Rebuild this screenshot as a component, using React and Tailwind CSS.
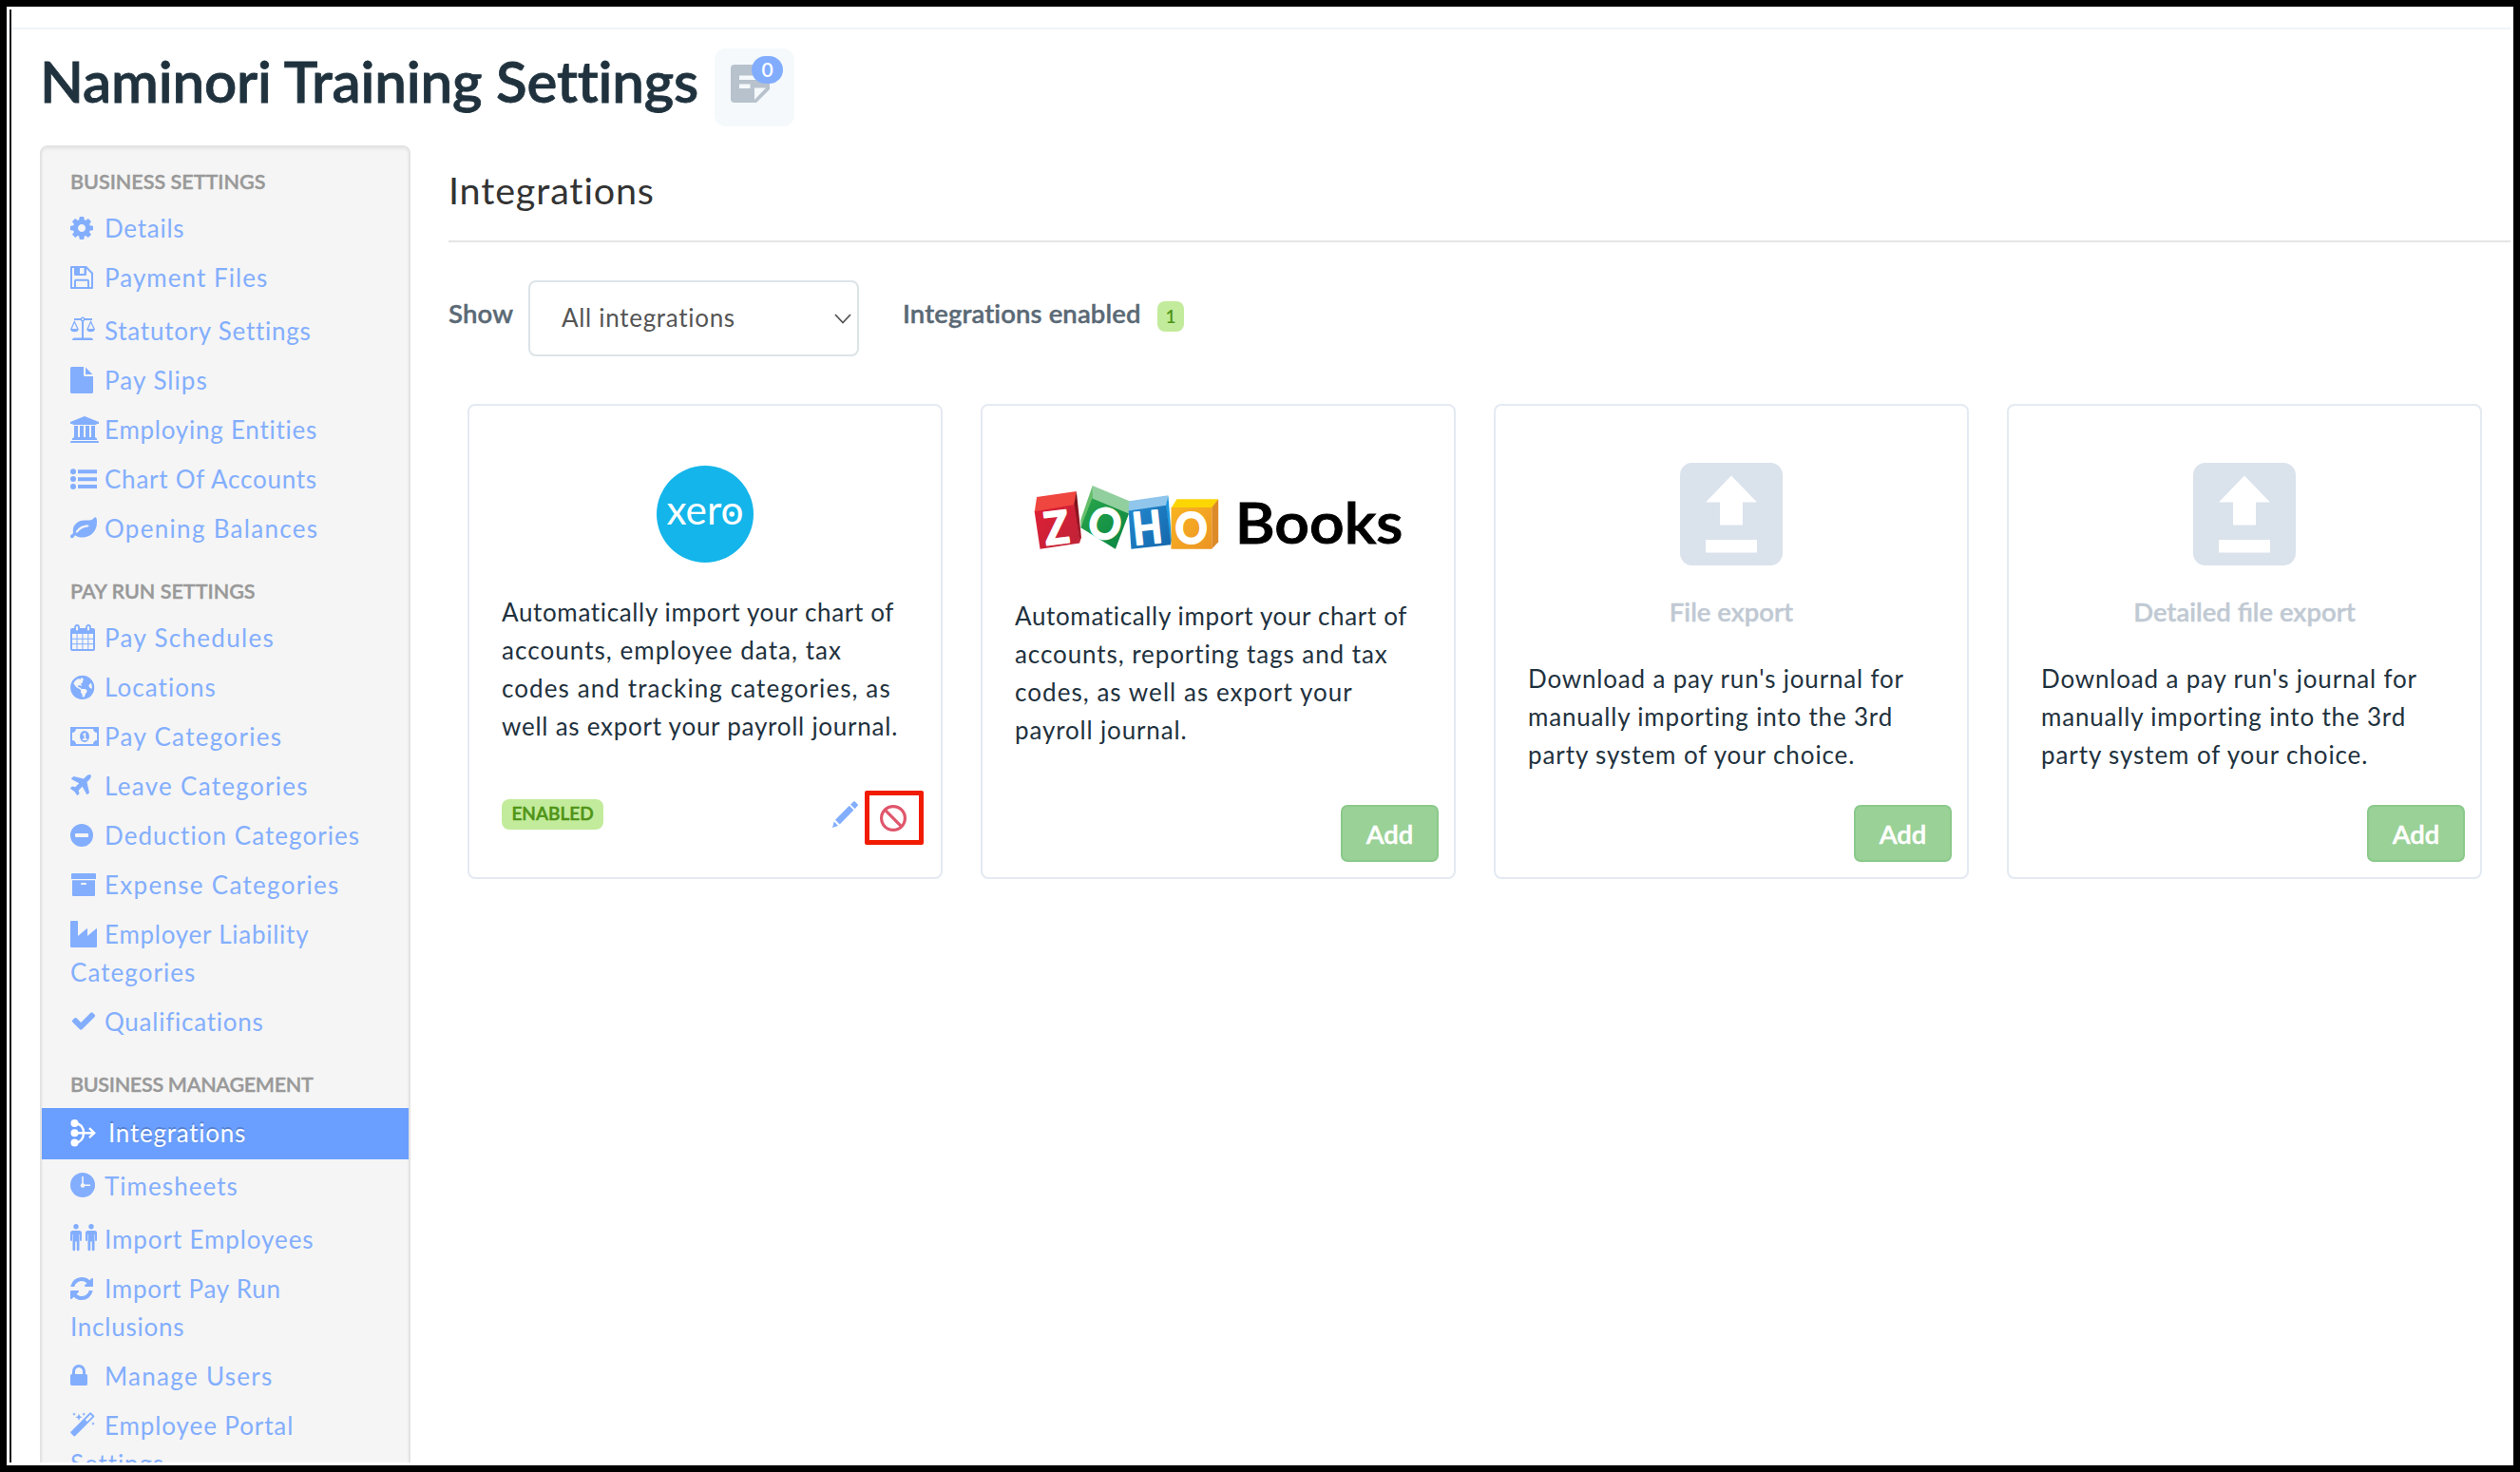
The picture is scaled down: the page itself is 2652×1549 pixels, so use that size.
import { FaGlobeAmericas, FaLeaf } from "react-icons/fa";

// Every sidebar icon is drawn on a 28px-high grid whose text baseline is at y=24.
function Glyph({ w = 30, children }) {
  return (
    <svg width={w} height="28" viewBox={`0 0 ${w} 28`} className="inline-block overflow-visible align-[-4px]" fill="currentColor">
      {children}
    </svg>
  );
}

const CogIcon = () => (
  <Glyph>
    <path transform="translate(-2 0) scale(0.015625)" d="M1152 896q0-106-75-181t-181-75-181 75-75 181 75 181 181 75 181-75 75-181zm512-109v222q0 12-8 23t-20 13l-185 28q-19 54-39 91 35 50 107 138 10 12 10 25t-9 23q-27 37-99 108t-94 71q-12 0-26-9l-138-108q-44 23-91 38-16 136-29 186-7 28-36 28h-222q-14 0-24.500-8.500t-11.500-21.500l-28-184q-49-16-90-37l-141 107q-10 9-25 9-14 0-25-11-126-114-165-168-7-10-7-23 0-12 8-23 15-21 51-66.500t54-70.500q-27-50-41-99l-183-27q-13-2-21-12.500t-8-23.500v-222q0-12 8-23t19-13l186-28q14-46 39-92-40-57-107-138-10-12-10-24 0-10 9-23 26-36 98.500-107.500t94.500-71.500q13 0 26 10l138 107q44-23 91-38 16-136 29-186 7-28 36-28h222q14 0 24.500 8.500t11.500 21.500l28 184q49 16 90 37l142-107q9-9 24-9 13 0 25 10 129 119 165 170 7 8 7 22 0 12-8 23-15 21-51 66.500t-54 70.500q26 50 41 98l183 28q13 2 21 12.500t8 23.500z" />
  </Glyph>
);

const SaveIcon = () => (
  <Glyph>
    <path d="M1 3h15.500L23 9.500V25H1z" fill="none" stroke="currentColor" strokeWidth="2" strokeLinejoin="round" />
    <path d="M4 2h13v8.500a1.500 1.500 0 0 1-1.500 1.500h-10A1.500 1.500 0 0 1 4 10.500zM10 4v6h4.500V4z" fillRule="evenodd" />
    <path d="M5 25v-7.500a.8.8 0 0 1 .8-.8h12.400a.8.8 0 0 1 .8.800V25" fill="none" stroke="currentColor" strokeWidth="2" />
  </Glyph>
);

const ScaleIcon = () => (
  <Glyph>
    <path d="M4 2h7.500M14.500 2H23M13 4v18" fill="none" stroke="currentColor" strokeWidth="2" />
    <circle cx="13" cy="2" r="1.700" fill="none" stroke="currentColor" strokeWidth="1.400" />
    <path d="M.8 12.500L4.300 4.500l3.800 8M18 12.500l3.600-8 3.700 8" fill="none" stroke="currentColor" strokeWidth="1.300" />
    <path d="M0 12h8.800c0 2-1.800 3.300-4.400 3.300S0 14 0 12zM17.200 12H26c0 2-1.800 3.300-4.400 3.300s-4.400-1.300-4.400-3.300zM2 24c0-1.500 1-2.500 2.500-2.500h17c1.500 0 2.500 1 2.500 2.500z" />
  </Glyph>
);

const FileIcon = () => (
  <Glyph>
    <path d="M0 1.500A1.500 1.500 0 0 1 1.500 0H14v8.500A1.500 1.500 0 0 0 15.500 10H24v16.500a1.500 1.500 0 0 1-1.500 1.500h-21A1.500 1.500 0 0 1 0 26.500zM16 .4L23.300 8H16z" />
  </Glyph>
);

const BankIcon = () => (
  <Glyph>
    <path d="M15 0l15 6v2h-2l-1 1H3L2 8H0V6zM4 10h4v12h2V10h4v12h2V10h4v12h2V10h4v12l2 1.500V25H2v-1.500L4 22zM1 26h28l1 1v1H0v-1z" />
  </Glyph>
);

const ListIcon = () => (
  <Glyph>
    <circle cx="3" cy="6.300" r="3" />
    <circle cx="3" cy="14" r="3" />
    <circle cx="3" cy="22" r="3" />
    <path d="M8 4.300h20v4H8zM8 12.200h20v4H8zM8 20.100h20v4H8z" />
  </Glyph>
);

const LeafIcon = () => (
  <Glyph>
    <path d="M27.500 3.200c-.5-1.200-1.800-1.300-2.600-.3-1.500 2-3.200 2.600-6.400 2.600h-3.300C8 5.500 2.800 10.200 2.800 16.500c0 1 .1 1.700.3 2.400C1.500 20.300 0 21 0 22.400c0 .9.800 1.900 1.900 1.900 1.400 0 2-1.700 3.300-3.100 1.800 1.400 4.200 2.300 7.300 2.300C21.500 23.500 28 17 28 7.500c0-1.700-.1-3.200-.5-4.300zM7.300 18.400c-.9.600-2-.5-1.300-1.400 3.500-4.300 6.700-6.400 12.500-6.400 1.300 0 1.300 1.900 0 1.900-4.500.2-7.300 2-11.200 5.900z" fillRule="evenodd" />
  </Glyph>
);

const CalendarIcon = () => (
  <Glyph>
    <path d="M2 4h22a2 2 0 0 1 2 2v20a2 2 0 0 1-2 2H2a2 2 0 0 1-2-2V6a2 2 0 0 1 2-2zM2 10v16h22V10z" fillRule="evenodd" />
    <path d="M7 10v16M12.900 10v16M18.800 10v16M2 15.300h22M2 20.700h22" fill="none" stroke="currentColor" strokeWidth="1" />
    <rect x="5" y="1" width="4" height="6.500" rx="2" className="fill-[#f5f5f5] stroke-current" strokeWidth="1.800" />
    <rect x="17" y="1" width="4" height="6.500" rx="2" className="fill-[#f5f5f5] stroke-current" strokeWidth="1.800" />
  </Glyph>
);

const GlobeIcon = () => (
  <Glyph>
    <FaGlobeAmericas x="-0.300" y="1.400" width="24.600" height="24.600" />
  </Glyph>
);

const MoneyIcon = () => (
  <Glyph>
    <path d="M0 4h30v20H0zM6 6c0 2.200-1.800 4-4 4v8c2.200 0 4 1.800 4 4h18c0-2.200 1.800-4 4-4v-8c-2.200 0-4-1.800-4-4z" fillRule="evenodd" />
    <ellipse cx="15" cy="14" rx="5" ry="6" />
    <path d="M13 11.800l1.800-1.600h1.400v6.200h1.600V18h-5v-1.600h1.700v-4l-1 .7z" className="fill-[#f5f5f5]" />
  </Glyph>
);

const PlaneIcon = () => (
  <Glyph>
    <path transform="translate(-3 0) scale(0.015625)" d="M1568 160q44 52 12 148t-108 172l-161 161 160 696q5 19-12 33l-128 96q-7 6-19 6-4 0-7-1-15-3-21-16l-279-508-259 259 53 194q5 17-8 31l-96 96q-9 9-23 9h-2q-15-2-24-13l-189-252-252-189q-11-7-13-23-1-13 9-25l96-97q9-9 23-9 6 0 8 1l194 53 259-259-508-279q-14-8-17-24-2-16 9-27l128-128q14-13 30-8l665 159 160-160q76-76 172-108t148 12z" />
  </Glyph>
);

const MinusIcon = () => (
  <Glyph>
    <path d="M12 2a12 12 0 1 0 0 24 12 12 0 1 0 0-24zM6 12h12a1 1 0 0 1 1 1v2a1 1 0 0 1-1 1H6a1 1 0 0 1-1-1v-2a1 1 0 0 1 1-1z" fillRule="evenodd" />
  </Glyph>
);

const ArchiveIcon = () => (
  <Glyph>
    <path d="M2 2h24a1 1 0 0 1 1 1v5H1V3a1 1 0 0 1 1-1zM2 9.200h24V25a1 1 0 0 1-1 1H3a1 1 0 0 1-1-1zM12 12a.9.9 0 0 0 0 2h4a.9.9 0 0 0 0-2z" fillRule="evenodd" />
  </Glyph>
);

const FactoryIcon = () => (
  <Glyph>
    <path d="M0 1a1 1 0 0 1 1-1h6a1 1 0 0 1 1 1v15l9.200-7.800a.5.5 0 0 1 .8.400V16l9.200-7.800a.5.5 0 0 1 .8.400V27a1 1 0 0 1-1 1H1a1 1 0 0 1-1-1z" />
  </Glyph>
);

const CheckIcon = () => (
  <Glyph>
    <path transform="translate(0 -1) scale(0.015625)" d="M1671 566q0 40-28 68l-724 724-136 136q-28 28-68 28t-68-28l-136-136-362-362q-28-28-28-68t28-68l136-136q28-28 68-28t68 28l294 295 656-657q28-28 68-28t68 28l136 136q28 28 28 68z" />
  </Glyph>
);

const MergeIcon = () => (
  <Glyph>
    <circle cx="4.500" cy="4" r="4" />
    <circle cx="4.500" cy="14.200" r="4" />
    <circle cx="4.500" cy="24.500" r="4" />
    <path d="M4.500 3.500c6 1 9.500 5 9.500 10.700S10.500 24 4.500 25M4.500 14.200H25M20 9.200l5.200 5-5.200 5" fill="none" stroke="currentColor" strokeWidth="2.400" />
  </Glyph>
);

const ClockIcon = () => (
  <Glyph>
    <circle cx="13" cy="13" r="13" />
    <path d="M13 4v9.300h8" fill="none" className="stroke-[#f5f5f5]" strokeWidth="1.600" />
    <circle cx="13" cy="13.500" r="2.300" className="fill-[#f5f5f5]" />
  </Glyph>
);

const MAN = "M2.500 5h7A2.500 2.500 0 0 1 12 7.500V15a1 1 0 0 1-2 0V9h-.5v16a1.300 1.300 0 0 1-2.700 0v-8.500h-1.600V25a1.300 1.300 0 0 1-2.700 0V9H2v6a1 1 0 0 1-2 0V7.500A2.500 2.500 0 0 1 2.500 5z";
const PeopleIcon = () => (
  <Glyph>
    <circle cx="6" cy="0.700" r="2.700" />
    <path d={MAN} />
    <g transform="translate(16 0)">
      <circle cx="6" cy="0.700" r="2.700" />
      <path d={MAN} />
    </g>
  </Glyph>
);

const RefreshIcon = () => (
  <Glyph>
    <path transform="translate(-2 0) scale(0.015625)" d="M1639 1056q0 5-1 7-64 268-268 434.500t-478 166.500q-146 0-282.500-55t-243.500-157l-129 129q-19 19-45 19t-45-19-19-45v-448q0-26 19-45t45-19h448q26 0 45 19t19 45-19 45l-137 137q71 66 161 102t187 36q134 0 250-65t186-179q11-17 53-117 8-23 30-23h192q13 0 22.500 9.500t9.500 22.500zm25-800v448q0 26-19 45t-45 19h-448q-26 0-45-19t-19-45 19-45l138-138q-148-137-349-137-134 0-250 65t-186 179q-11 17-53 117-8 23-30 23h-199q-13 0-22.500-9.500t-9.500-22.500v-7q65-268 270-434.500t480-166.500q146 0 284 55.500t245 156.500l130-129q19-19 45-19t45 19 19 45z" />
  </Glyph>
);

const LockIcon = () => (
  <Glyph>
    <path transform="translate(-5 0) scale(0.015625)" d="M640 768h512v-192q0-106-75-181t-181-75-181 75-75 181v192zm832 96v576q0 40-28 68t-68 28h-960q-40 0-68-28t-28-68v-576q0-40 28-68t68-28h32v-192q0-184 132-316t316-132 316 132 132 316v192h32q40 0 68 28t28 68z" />
  </Glyph>
);

const WandIcon = () => (
  <Glyph>
    <path d="M20.300.7a1.300 1.300 0 0 1 1.800 0l2.800 2.800a1.300 1.300 0 0 1 0 1.800L5.200 25a1.300 1.300 0 0 1-1.800 0L.6 22.200a1.300 1.300 0 0 1 0-1.800zM21.200 2.600l-5.400 5.400 1.900 1.900 5.400-5.400z" fillRule="evenodd" />
    <path d="M9 1.500l1 2.700 2.700 1-2.700 1-1 2.700-1-2.700-2.700-1 2.700-1zM4 .3l.6 1.200 1.200.6-1.200.6L4 3.900l-.6-1.200-1.200-.6 1.200-.6zM14.200.3l.6 1.200 1.200.6-1.200.6-.6 1.200-.6-1.200-1.200-.6 1.200-.6zM24 10.300l.6 1.200 1.200.6-1.200.6-.6 1.200-.6-1.200-1.200-.6 1.200-.6z" />
  </Glyph>
);

const NORMAL = "tracking-[0.750px]";
const WIDE = "tracking-[1.050px]";
const WIDER = "tracking-[1.300px]";

const SECTIONS = [
  {
    title: "BUSINESS SETTINGS",
    items: [
      { icon: CogIcon, lines: ["Details"] },
      { icon: SaveIcon, lines: ["Payment Files"], spacing: WIDE },
      { icon: ScaleIcon, lines: ["Statutory Settings"], tall: true },
      { icon: FileIcon, lines: ["Pay Slips"], spacing: WIDE },
      { icon: BankIcon, lines: ["Employing Entities"] },
      { icon: ListIcon, lines: ["Chart Of Accounts"] },
      { icon: LeafIcon, lines: ["Opening Balances"], spacing: WIDER },
    ],
  },
  {
    title: "PAY RUN SETTINGS",
    items: [
      { icon: CalendarIcon, lines: ["Pay Schedules"], spacing: WIDER },
      { icon: GlobeIcon, lines: ["Locations"], spacing: WIDE },
      { icon: MoneyIcon, lines: ["Pay Categories"], spacing: WIDER },
      { icon: PlaneIcon, lines: ["Leave Categories"], spacing: WIDER },
      { icon: MinusIcon, lines: ["Deduction Categories"], spacing: WIDE },
      { icon: ArchiveIcon, lines: ["Expense Categories"], spacing: WIDER },
      { icon: FactoryIcon, lines: ["Employer Liability", "Categories"], nextSpacing: WIDE },
      { icon: CheckIcon, lines: ["Qualifications"] },
    ],
  },
  {
    title: "BUSINESS MANAGEMENT",
    titleSpacing: "tracking-[-0.300px]",
    items: [
      { icon: MergeIcon, lines: ["Integrations"], active: true },
      { icon: ClockIcon, lines: ["Timesheets"], tall: true, spacing: WIDE },
      { icon: PeopleIcon, lines: ["Import Employees"], tall: true, spacing: "tracking-[0.900px]" },
      { icon: RefreshIcon, lines: ["Import Pay Run", "Inclusions"] },
      { icon: LockIcon, lines: ["Manage Users"], spacing: WIDER },
      { icon: WandIcon, lines: ["Employee Portal", "Settings"], spacing: "tracking-[0.900px]" },
    ],
  },
];

function NavItem({ icon: Icon, lines, active, tall, spacing = NORMAL, nextSpacing = "" }) {
  const pad = active ? "pt-1.5" : tall ? "pt-2" : "pt-1";
  const tone = active
    ? "bg-[#6a9eff] text-white [text-shadow:0_-2px_0_rgba(0,0,0,0.2)]"
    : "text-[#83aefe]";
  return (
    <li className={`${pad} ${tone} ${spacing} pb-2 pl-[30px] text-[26px] leading-10 whitespace-nowrap`}>
      <span className={active ? "inline-block w-[40px]" : "inline-block w-[36px]"}>
        <Icon />
      </span>
      {lines[0]}
      {lines[1] && <div className={nextSpacing}>{lines[1]}</div>}
    </li>
  );
}

function Sidebar() {
  return (
    <nav className="h-[1480px] w-[390px] shrink-0 rounded-lg border-2 border-[#e3e3e3] bg-[#f5f5f5] shadow-[inset_0_2px_3px_rgba(0,0,0,0.06)]">
      {SECTIONS.map((s, i) => (
        <section key={s.title} className={i === 0 ? "pt-4" : "pt-[18px]"}>
          <h3 className={`${s.titleSpacing || ""} mb-[5px] pl-[30px] text-[21.500px] leading-10 font-semibold text-[#999] [-webkit-text-stroke:0.4px_#999]`}>{s.title}</h3>
          <ul>
            {s.items.map((it) => (
              <NavItem key={it.lines[0]} {...it} />
            ))}
          </ul>
        </section>
      ))}
    </nav>
  );
}

function XeroLogo() {
  return (
    <svg width="102" height="102" viewBox="0 0 102 102" className="mt-[63px]">
      <circle cx="51" cy="51" r="51" fill="#13b5ea" />
      <text x="10.500" y="61.500" textLength="81" lengthAdjust="spacingAndGlyphs" fontFamily="Lato" fontSize="43" fill="#fff">
        xero
      </text>
      <circle cx="79.200" cy="51" r="2.800" fill="#fff" />
    </svg>
  );
}

function ZohoBooksLogo() {
  return (
    <svg width="388" height="68" viewBox="198 298 1125 200" preserveAspectRatio="none" className="mt-[84px] overflow-visible">
      <defs>
        <linearGradient id="zr" x1="0" y1="0" x2="1" y2="1"><stop offset="0" stopColor="#e01f35" /><stop offset="1" stopColor="#bd2338" /></linearGradient>
        <linearGradient id="zg" x1="0" y1="0" x2="1" y2="1"><stop offset="0" stopColor="#2aa64a" /><stop offset="1" stopColor="#078443" /></linearGradient>
        <linearGradient id="zb" x1="0" y1="0" x2="1" y2="1"><stop offset="0" stopColor="#2389cf" /><stop offset="1" stopColor="#1466ab" /></linearGradient>
        <linearGradient id="zy" x1="0" y1="0" x2="1" y2="1"><stop offset="0" stopColor="#f9b421" /><stop offset="1" stopColor="#ec9424" /></linearGradient>
        <linearGradient id="zs" x1="0" y1="0" x2="0" y2="1"><stop offset="0" stopColor="#6d0f14" /><stop offset="1" stopColor="#b51f30" /></linearGradient>
      </defs>
      <path d="M207 333L328 316L322 360L200 380z" fill="#ef463f" />
      <path d="M328 316L343 458L337 476L320 358z" fill="url(#zs)" />
      <path d="M200 378L322 357L338 476L217 494z" fill="url(#zr)" />
      <path d="M377 298L493 347L486 390L376 342z" fill="#92cf9f" />
      <path d="M377 298L378 342L342 428L341 404z" fill="#66bf6d" />
      <path d="M376 338L488 385L447 494L341 428z" fill="url(#zg)" />
      <path d="M489 346L608 328L602 362L487 378z" fill="#90c6ec" />
      <path d="M608 328L619 470L614 482L601 360z" fill="#1b98df" />
      <path d="M487 376L602 359L616 481L495 494z" fill="url(#zb)" />
      <path d="M634 340H761L741 368H617z" fill="#fcd603" />
      <path d="M761 340V472L741 494V366z" fill="#dd8a28" />
      <path d="M617 366H741V494H617z" fill="url(#zy)" />
      <g fontFamily="Lato" fontWeight="700" fill="#fff" stroke="#fff" strokeWidth="6" strokeLinejoin="round" textAnchor="middle">
        <text fontSize="138" transform="translate(273 477) rotate(-7) scale(0.9 1)">Z</text>
        <text fontSize="130" transform="translate(401 460) rotate(18) scale(0.93 1)">O</text>
        <text fontSize="138" transform="translate(549 477) rotate(-6) scale(0.84 1)">H</text>
        <text fontSize="132" transform="translate(678 477) scale(0.92 1)">O</text>
      </g>
      <text x="812" y="477" textLength="512" lengthAdjust="spacingAndGlyphs" fontFamily="Lato" fontWeight="600" fontSize="176" fill="#000" stroke="#000" strokeWidth="3">
        Books
      </text>
    </svg>
  );
}

function UploadLogo() {
  return (
    <svg width="108" height="108" viewBox="0 0 108 108" className="mt-[60px]">
      <rect width="108" height="108" rx="13" fill="#dae2ec" />
      <path d="M54 13.500L81 41.500H66V65.500H42V41.500H27zM27 81H81V94.500H27z" fill="#fff" />
    </svg>
  );
}

function Card({ logo, logoClass, label, text, footer }) {
  return (
    <article className="flex h-[500px] w-[500px] flex-col rounded-lg border-2 border-[#e4eaf2] bg-white">
      <div className={`${logoClass} flex shrink-0 flex-col items-center`}>{logo}</div>
      {label && <h4 className="mb-[30px] text-center text-[27.500px] leading-10 font-semibold text-[#c0c9d3] [-webkit-text-stroke:0.4px_#c0c9d3]">{label}</h4>}
      <p className="pl-[34px] text-[26px] leading-10 text-[#1f323e]">
        {text.map(([line, spacing]) => (
          <span key={line} className={`${spacing} block whitespace-nowrap`}>{line}</span>
        ))}
      </p>
      <div className="mt-auto">{footer}</div>
    </article>
  );
}

function AddFooter() {
  return (
    <div className="flex justify-end pr-4 pb-4">
      <button className="h-[60px] w-[103px] rounded-[7px] border-2 border-[#8bc98b] bg-[#9ad197] text-[27.500px] leading-[53px] font-semibold text-white [-webkit-text-stroke:0.5px_#fff]">Add</button>
    </div>
  );
}

function EnabledFooter() {
  return (
    <div className="flex items-start pr-[18px] pb-[34px] pl-[34px]">
      <span className="mt-[9px] h-8 w-[107px] rounded-lg bg-[#c2eb9b] text-center text-[19px] leading-[30px] font-semibold text-[#4f9417] [-webkit-text-stroke:0.5px_#4f9417]">ENABLED</span>
      <svg width="27" height="28" viewBox="0 0 27 28" className="mt-[11px] mr-[7px] ml-auto text-[#83aefe]" fill="currentColor">
        <path d="M0 28L1.800 21.500L6 26zM3 19.800L17.800 4.800L22.400 9.400L7.700 24.500zM19 3.600L22.300.4a1 1 0 0 1 1.400 0l3 3a1 1 0 0 1 0 1.400L23.600 8.200z" />
      </svg>
      <span className="flex h-[57px] w-[62px] items-center justify-center rounded-[2px] border-[5px] border-[#f11b00]">
        <svg width="28" height="28" viewBox="0 0 28 28" fill="none" className="mr-0.5 stroke-[#e0566b]" strokeWidth="3.200">
          <circle cx="14" cy="14" r="12.400" />
          <path d="M5.200 5.200L22.800 22.800" />
        </svg>
      </span>
    </div>
  );
}

const XERO_TEXT = [
  ["Automatically import your chart of", "tracking-[0.650px]"],
  ["accounts, employee data, tax", "tracking-[1.050px]"],
  ["codes and tracking categories, as", "tracking-[1.100px]"],
  ["well as export your payroll journal.", "tracking-[0.750px]"],
];
const ZOHO_TEXT = [
  ["Automatically import your chart of", "tracking-[0.650px]"],
  ["accounts, reporting tags and tax", "tracking-[0.920px]"],
  ["codes, as well as export your", "tracking-[1.050px]"],
  ["payroll journal.", "tracking-[0.850px]"],
];
const EXPORT_TEXT = [
  ["Download a pay run's journal for", "tracking-[0.820px]"],
  ["manually importing into the 3rd", "tracking-[0.820px]"],
  ["party system of your choice.", "tracking-[0.900px]"],
];

function Header() {
  return (
    <div className="flex h-[82px] pl-[30px]">
      <h1 className="w-[710px] text-[60px] leading-[69px] font-semibold tracking-[-0.150px] whitespace-nowrap text-[#1f323e] [-webkit-text-stroke:0.8px_#1f323e]">Naminori Training Settings</h1>
      <div className="relative h-[82px] w-[84px] rounded-xl bg-[#f5f9fb]">
        <svg width="41" height="40" viewBox="0 0 41 40" className="mt-[17px] ml-[17px]">
          <path d="M4 0H37a4 4 0 0 1 4 4V26L27 40H4a4 4 0 0 1-4-4V4a4 4 0 0 1 4-4z" fill="#b8c2cd" />
          <path d="M9 11.500H27V16H9zM9 20.500H20.500V25H9zM25 24.500H37L25 37z" fill="#f5f9fb" />
        </svg>
        <span className="absolute top-2 left-[39px] h-[29px] w-[33px] rounded-full bg-[#82adff] text-center text-[21px] leading-[27px] font-semibold text-white">0</span>
      </div>
    </div>
  );
}

function Controls() {
  return (
    <div className="mt-10 flex h-20 whitespace-nowrap text-[#5a6975]">
      <label className="w-[84px] text-[27.500px] leading-[70px] font-semibold tracking-[0.200px] [-webkit-text-stroke:0.4px_#5a6975]">Show</label>
      <div className="flex w-[348px] items-center justify-between rounded-lg border-[2.500px] border-[#dce4e8] pr-[6px] pl-[33px]">
        <span className="mb-0.5 text-[26px] leading-[74px] tracking-[0.700px] text-[#555]">All integrations</span>
        <svg width="18" height="11" viewBox="0 0 18 11" fill="none" stroke="#555" strokeWidth="1.800">
          <path d="M1 1L9 9.500L17 1" />
        </svg>
      </div>
      <span className="ml-[46px] w-[252px] text-[27.500px] leading-[70px] font-semibold tracking-[0.100px] [-webkit-text-stroke:0.4px_#5a6975]">Integrations enabled</span>
      <span className="mt-[22px] ml-4 h-8 w-[28px] rounded-lg bg-[#c2eb9b] text-center text-[19px] leading-[31px] font-semibold text-[#4f9417]">1</span>
    </div>
  );
}

export default function App() {
  return (
    <div className="h-[1549px] w-[2652px] overflow-hidden bg-black p-[7px] font-['Lato',sans-serif]">
      <div className="h-[1535px] w-[2638px] bg-white pt-[3px] pl-[3px]">
        <div className="h-[1529px] w-[2632px] overflow-hidden border-l-2 border-[#111]">
          <div className="h-[21px] border-b-2 border-[#eff4f7]" />
          <div className="pt-5">
            <Header />
            <div className="mt-5 flex pl-[30px]">
              <Sidebar />
              <main className="ml-10 w-[2170px] shrink-0">
                <h2 className="h-[102px] border-b-2 border-[#e4e5e6] pt-[23px] text-[39.500px] leading-[48px] tracking-[0.850px] text-[#333]">Integrations</h2>
                <Controls />
                <div className="mt-[50px] ml-5 flex gap-10">
                  <Card logo={<XeroLogo />} logoClass="h-[197px]" text={XERO_TEXT} footer={<EnabledFooter />} />
                  <Card logo={<ZohoBooksLogo />} logoClass="h-[201px]" text={ZOHO_TEXT} footer={<AddFooter />} />
                  <Card logo={<UploadLogo />} logoClass="h-[197px]" label="File export" text={EXPORT_TEXT} footer={<AddFooter />} />
                  <Card logo={<UploadLogo />} logoClass="h-[197px]" label="Detailed file export" text={EXPORT_TEXT} footer={<AddFooter />} />
                </div>
              </main>
            </div>
          </div>
        </div>
      </div>
    </div>
  );
}
